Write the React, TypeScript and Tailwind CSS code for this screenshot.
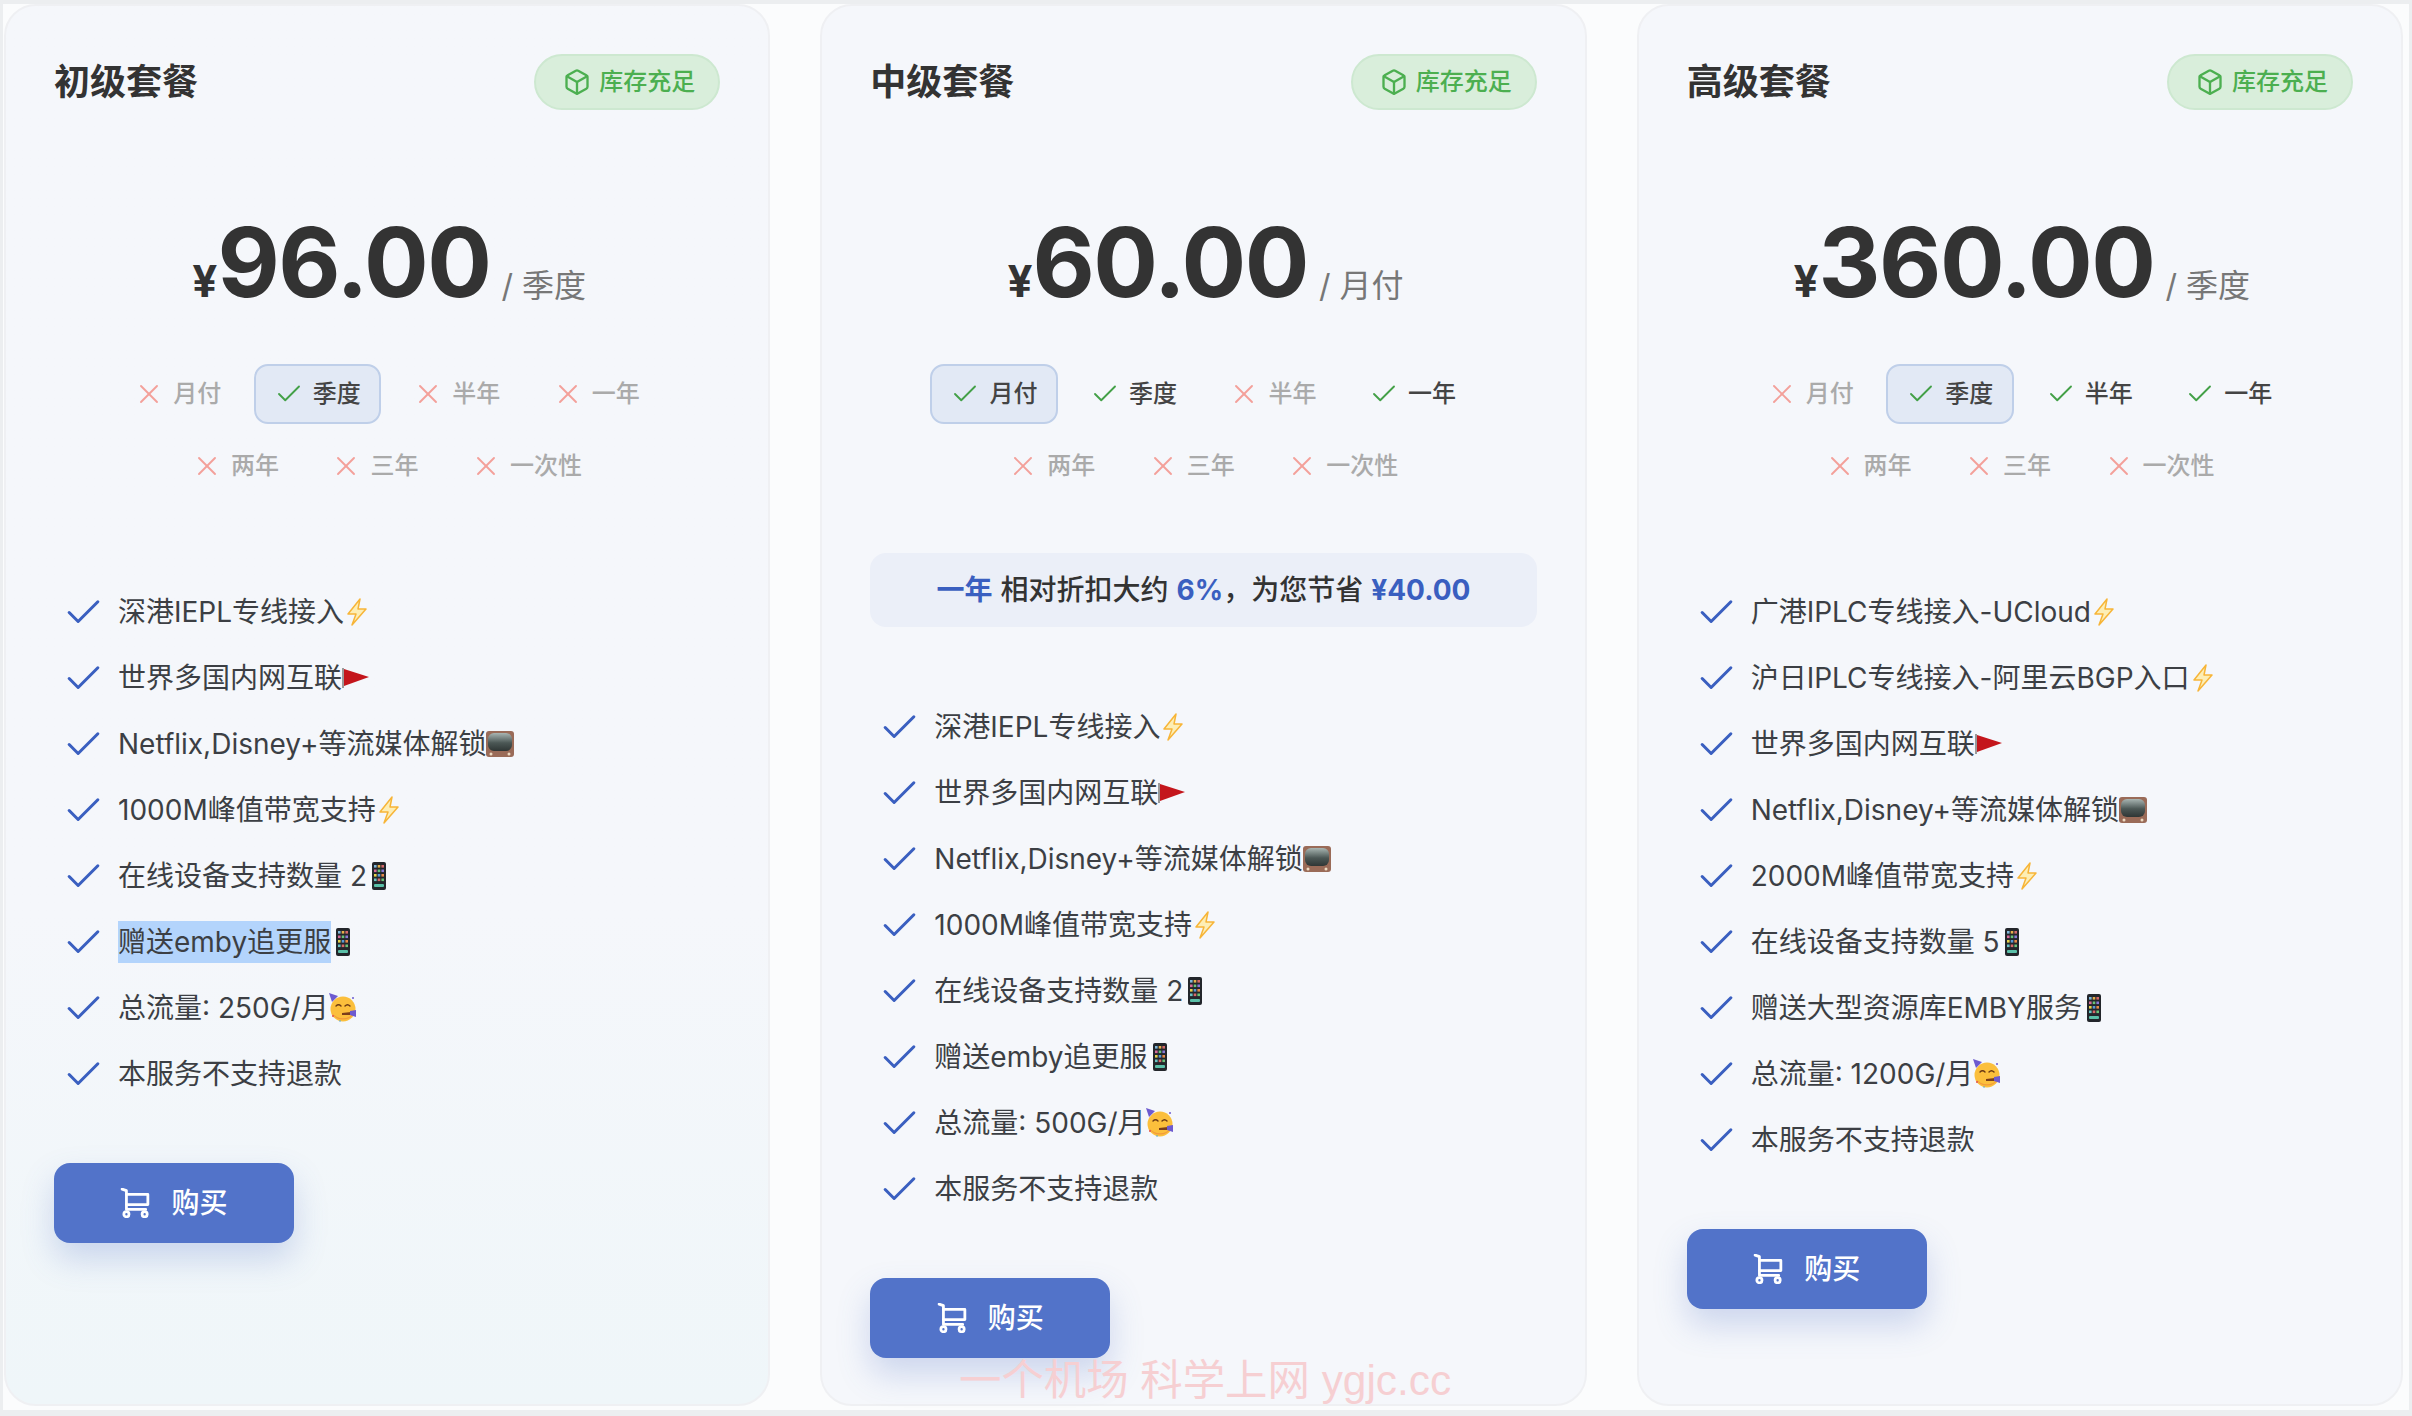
import React from 'react';
import { Check, X, Box } from 'lucide-react';

type Emoji = 'bolt' | 'flag' | 'tv' | 'phone' | 'party';
type Feature = { text: string; emoji?: Emoji; selected?: boolean };

type Period = { label: string; on?: boolean; active?: boolean };

type Plan = {
  name: string;
  price: string;
  per: string;
  periods: Period[];
  saving?: boolean;
  features: Feature[];
};

const plans: Plan[] = [
  {
    name: '初级套餐',
    price: '96.00',
    per: '季度',
    periods: [
      { label: '月付' },
      { label: '季度', on: true, active: true },
      { label: '半年' },
      { label: '一年' },
      { label: '两年' },
      { label: '三年' },
      { label: '一次性' },
    ],
    features: [
      { text: '深港IEPL专线接入', emoji: 'bolt' },
      { text: '世界多国内网互联', emoji: 'flag' },
      { text: 'Netflix,Disney+等流媒体解锁', emoji: 'tv' },
      { text: '1000M峰值带宽支持', emoji: 'bolt' },
      { text: '在线设备支持数量 2', emoji: 'phone' },
      { text: '赠送emby追更服', emoji: 'phone', selected: true },
      { text: '总流量: 250G/月', emoji: 'party' },
      { text: '本服务不支持退款' },
    ],
  },
  {
    name: '中级套餐',
    price: '60.00',
    per: '月付',
    saving: true,
    periods: [
      { label: '月付', on: true, active: true },
      { label: '季度', on: true },
      { label: '半年' },
      { label: '一年', on: true },
      { label: '两年' },
      { label: '三年' },
      { label: '一次性' },
    ],
    features: [
      { text: '深港IEPL专线接入', emoji: 'bolt' },
      { text: '世界多国内网互联', emoji: 'flag' },
      { text: 'Netflix,Disney+等流媒体解锁', emoji: 'tv' },
      { text: '1000M峰值带宽支持', emoji: 'bolt' },
      { text: '在线设备支持数量 2', emoji: 'phone' },
      { text: '赠送emby追更服', emoji: 'phone' },
      { text: '总流量: 500G/月', emoji: 'party' },
      { text: '本服务不支持退款' },
    ],
  },
  {
    name: '高级套餐',
    price: '360.00',
    per: '季度',
    periods: [
      { label: '月付' },
      { label: '季度', on: true, active: true },
      { label: '半年', on: true },
      { label: '一年', on: true },
      { label: '两年' },
      { label: '三年' },
      { label: '一次性' },
    ],
    features: [
      { text: '广港IPLC专线接入-UCloud', emoji: 'bolt' },
      { text: '沪日IPLC专线接入-阿里云BGP入口', emoji: 'bolt' },
      { text: '世界多国内网互联', emoji: 'flag' },
      { text: 'Netflix,Disney+等流媒体解锁', emoji: 'tv' },
      { text: '2000M峰值带宽支持', emoji: 'bolt' },
      { text: '在线设备支持数量 5', emoji: 'phone' },
      { text: '赠送大型资源库EMBY服务', emoji: 'phone' },
      { text: '总流量: 1200G/月', emoji: 'party' },
      { text: '本服务不支持退款' },
    ],
  },
];

const EmojiIcon: React.FC<{ name: Emoji }> = ({ name }) => {
  if (name === 'bolt') {
    return (
      <svg viewBox="2 0 20 28" className="w-[20px] h-[28px] shrink-0 ml-[3px]">
        <path d="M15 1 L3 16 H11 L7 27 L21 11 H13 Z" fill="#fdeeb5" stroke="#f7b538" strokeWidth="1.5" strokeLinejoin="round" />
      </svg>
    );
  }
  if (name === 'flag') {
    return (
      <svg viewBox="0 0 27 20" className="w-[27px] h-[20px] shrink-0">
        <path d="M0 0 H2 V20 H0 Z" fill="#9a9a9a" />
        <path d="M2 1 L27 9 L2 18 Z" fill="#c4161c" />
      </svg>
    );
  }
  if (name === 'tv') {
    return (
      <svg viewBox="0 0 28 26" className="w-[28px] h-[26px] shrink-0">
        <defs>
          <linearGradient id="tv-screen" x1="0" y1="0" x2="0" y2="1">
            <stop offset="0" stopColor="#a8b5b2" />
            <stop offset="0.55" stopColor="#4b5755" />
            <stop offset="1" stopColor="#2f3635" />
          </linearGradient>
        </defs>
        <rect x="0" y="0" width="28" height="26" rx="3" fill="#9a6b58" />
        <rect x="2" y="2" width="24" height="18" rx="6" fill="url(#tv-screen)" />
        <circle cx="5" cy="23" r="1.5" fill="#ecd9c0" />
        <circle cx="23" cy="23" r="1.5" fill="#ecd9c0" />
      </svg>
    );
  }
  if (name === 'phone') {
    return (
      <svg viewBox="0 0 14 28" className="w-[14px] h-[28px] shrink-0 ml-[5px]">
        <rect x="0" y="0" width="14" height="28" rx="2" fill="#23262b" />
        <rect x="2" y="3" width="2.6" height="2.6" fill="#7fb6d9" />
        <rect x="5.7" y="3" width="2.6" height="2.6" fill="#e6b04a" />
        <rect x="9.4" y="3" width="2.6" height="2.6" fill="#d66a6a" />
        <rect x="2" y="7.5" width="2.6" height="2.6" fill="#d66a9a" />
        <rect x="5.7" y="7.5" width="2.6" height="2.6" fill="#6ac47a" />
        <rect x="9.4" y="7.5" width="2.6" height="2.6" fill="#8a7ad6" />
        <rect x="2" y="12" width="2.6" height="2.6" fill="#e6d24a" />
        <rect x="5.7" y="12" width="2.6" height="2.6" fill="#5a9ad6" />
        <rect x="9.4" y="12" width="2.6" height="2.6" fill="#e68a4a" />
        <rect x="2" y="16.5" width="2.6" height="2.6" fill="#6ac4c4" />
        <rect x="5.7" y="16.5" width="2.6" height="2.6" fill="#d66a6a" />
        <rect x="9.4" y="16.5" width="2.6" height="2.6" fill="#6ac47a" />
        <rect x="2" y="22" width="10" height="3" rx="1" fill="#5ac0a8" />
      </svg>
    );
  }
  return (
    <svg viewBox="0 0 30 30" className="w-[30px] h-[30px] shrink-0 -ml-[1px] -mt-[2px]">
      <circle cx="15" cy="17" r="12.5" fill="#fbbf3c" />
      <path d="M4 21 a12.5 12.5 0 0 0 22 0 a14 14 0 0 1 -22 0Z" fill="#f08a3c" opacity="0.7" />
      <path d="M1 1 L10 4 L4 10 Z" fill="#6d5bd0" />
      <path d="M8 14 q2.5 -2.5 5 0 M17 14 q2.5 -2.5 5 0" stroke="#6b3a14" strokeWidth="1.4" fill="none" strokeLinecap="round" />
      <path d="M14 21 l9 -1 l0 3 l-9 0 Z" fill="#7a3e1a" />
      <path d="M22 19 l6 -1 l0 7 l-6 -2 Z" fill="#6d5bd0" />
      <circle cx="5" cy="24" r="1" fill="#e2504c" />
      <circle cx="25" cy="6" r="1" fill="#6d5bd0" />
      <circle cx="12" cy="29" r="0.8" fill="#4ca6d8" />
    </svg>
  );
};

const CartIcon: React.FC = () => (
  <svg viewBox="0 0 28 28" fill="none" stroke="#ffffff" strokeWidth="2.6" strokeLinecap="round" strokeLinejoin="round" className="w-[30px] h-[30px]">
    <path d="M2 1 L6 2.5 V20 H24" />
    <path d="M6 6 H26 V15.5 H6" />
    <circle cx="6" cy="24.5" r="2.4" />
    <circle cx="23" cy="24.5" r="2.4" />
  </svg>
);

const PlanCard: React.FC<{ plan: Plan; tint?: boolean }> = ({ plan, tint }) => (
  <div
    className={`rounded-[32px] border-2 border-[#eff0f3] px-[48px] pt-[48px] ${
      tint ? 'bg-gradient-to-b from-[#f5f7fb] from-65% to-[#eff6f9]' : 'bg-[#f5f7fb]'
    }`}
  >
    <div className="flex items-center justify-between h-[56px]">
      <h2 className="text-[36px] font-bold text-[#333333] leading-none">{plan.name}</h2>
      <div className="flex items-center gap-[8px] h-[56px] pl-[27px] pr-[23px] rounded-full bg-[#d9eedb] border-2 border-[#cde8d0] text-[#4caf50] text-[24px] font-medium">
        <Box size={28} strokeWidth={2} />
        库存充足
      </div>
    </div>

    <div className="flex items-baseline justify-center mt-[80px] h-[168px] pt-[4px] pl-[4px] text-[#333333]">
      <span className="text-[44px] font-bold leading-none">¥</span>
      <span className="text-[96px] font-bold tracking-[-1.5px] leading-[136px]">{plan.price}</span>
      <span className="text-[32px] text-[#777777] ml-[11px]">/ {plan.per}</span>
    </div>

    <div className="flex flex-wrap justify-center gap-[12px] mt-[6px] h-[132px]">
      {plan.periods.map((p) => (
        <div
          key={p.label}
          className={`flex items-center gap-[12px] h-[60px] pl-[21px] pr-[18.5px] rounded-[14px] border-2 text-[24px] font-medium ${
            p.active ? 'bg-[#e2e9f5] border-[#bfcfe9] text-[#333333]' : 'border-transparent'
          } ${p.on ? 'text-[#444444]' : 'text-[#aaaaaa]'}`}
        >
          {p.on ? (
            <Check size={30} strokeWidth={1.5} className="text-[#43a047] shrink-0 -m-[3px]" />
          ) : (
            <X size={32} strokeWidth={1.4} className="text-[#f3a09a] shrink-0 -m-[4px]" />
          )}
          {p.label}
        </div>
      ))}
    </div>

    {plan.saving && (
      <div className="flex items-center justify-center h-[74px] mt-[57px] -mb-[16px] rounded-[16px] bg-[#ebeff8] text-[28px] font-medium text-[#333333]">
        <span className="font-bold text-[#3a5fc0]">一年</span>
        <span className="ml-[8px]">相对折扣大约</span>
        <span className="ml-[8px] font-bold text-[#3a5fc0]">6%</span>
        <span>，为您节省</span>
        <span className="ml-[8px] font-bold text-[#3a5fc0]">¥40.00</span>
      </div>
    )}

    <ul className="flex flex-col mt-[83px]">
      {plan.features.map((f) => (
        <li key={f.text} className="flex items-center h-[66px] text-[28px] text-[#3c3f44]">
          <Check size={43} strokeWidth={1.7} className="text-[#3a5fc0] ml-[8px] mr-[13px] shrink-0" />
          <span className={f.selected ? 'bg-[#b3d4fc] h-[42px] leading-[42px]' : ''}>{f.text}</span>
          {f.emoji && <EmojiIcon name={f.emoji} />}
        </li>
      ))}
    </ul>

    <button
      type="button"
      className="flex items-center justify-center gap-[21px] w-[240px] h-[80px] mt-[56px] rounded-[16px] bg-[#5273c9] text-white text-[28px] font-medium shadow-[0_16px_32px_rgba(82,115,201,0.25)]"
    >
      <CartIcon />
      购买
    </button>
  </div>
);

export default function App() {
  return (
    <div className="relative w-[2412px] h-[1416px] overflow-hidden bg-[#fbfcfd] border-t-[4px] border-b-[6px] border-x-[3px] border-[#eceef0] font-['Inter','Noto_Sans_CJK_SC',sans-serif]">
      <div className="grid grid-cols-3 gap-[50px] h-full pl-[1px] pr-[6px] pb-[4px]">
        {plans.map((plan, i) => (
          <PlanCard key={plan.name} plan={plan} tint={i === 0} />
        ))}
      </div>
      <div className="absolute left-[956px] top-[1356px] text-[42.4px] leading-none text-[#f6cfd2] font-['Liberation_Sans','Noto_Sans_CJK_SC',sans-serif]">
        一个机场 科学上网 ygjc.cc
      </div>
    </div>
  );
}
